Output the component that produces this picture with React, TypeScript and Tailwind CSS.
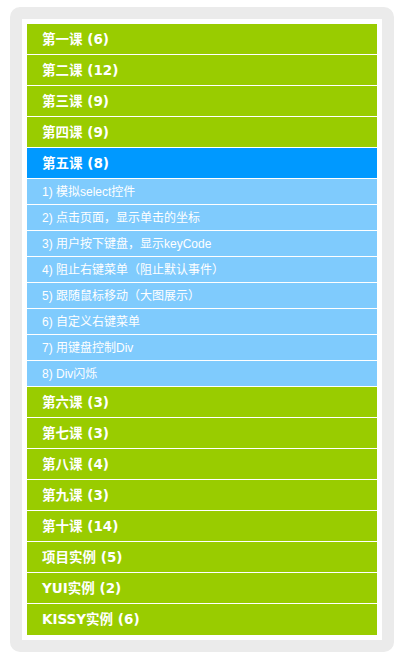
const lessons = [
  { title: '第一课', count: 6 },
  { title: '第二课', count: 12 },
  { title: '第三课', count: 9 },
  { title: '第四课', count: 9 },
  {
    title: '第五课',
    count: 8,
    open: true,
    items: [
      '1) 模拟select控件',
      '2) 点击页面，显示单击的坐标',
      '3) 用户按下键盘，显示keyCode',
      '4) 阻止右键菜单（阻止默认事件）',
      '5) 跟随鼠标移动（大图展示）',
      '6) 自定义右键菜单',
      '7) 用键盘控制Div',
      '8) Div闪烁',
    ],
  },
  { title: '第六课', count: 3 },
  { title: '第七课', count: 3 },
  { title: '第八课', count: 4 },
  { title: '第九课', count: 3 },
  { title: '第十课', count: 14 },
  { title: '项目实例', count: 5 },
  { title: 'YUI实例', count: 2 },
  { title: 'KISSY实例', count: 6 },
]

export default function App() {
  return (
    <div className="min-h-screen bg-white pt-[7px] px-[10px]">
      <div className="w-[384px] rounded-[10px] bg-[#ebebeb] p-[12px]">
        <ul className="bg-white p-[5px]">
          {lessons.map((l, i) => (
            <li key={l.title}>
              <div
                className={
                  'h-[31px] pl-[15px] flex items-center text-[13.5px] font-bold text-white font-["DejaVu_Sans","Noto_Sans_CJK_SC",sans-serif] ' +
                  (i === lessons.length - 1 ? '' : 'border-b border-white ') +
                  (l.open ? 'bg-[#0099ff]' : 'bg-[#99cc00]')
                }
              >
                {l.title} ({l.count})
              </div>
              {l.items && (
                <ul>
                  {l.items.map((it) => (
                    <li
                      key={it}
                      className='h-[26px] pl-[15px] flex items-center border-b border-white bg-[#7fcbfd] text-[12px] text-white font-["Liberation_Sans","Noto_Sans_CJK_SC",sans-serif]'
                    >
                      {it}
                    </li>
                  ))}
                </ul>
              )}
            </li>
          ))}
        </ul>
      </div>
    </div>
  )
}
